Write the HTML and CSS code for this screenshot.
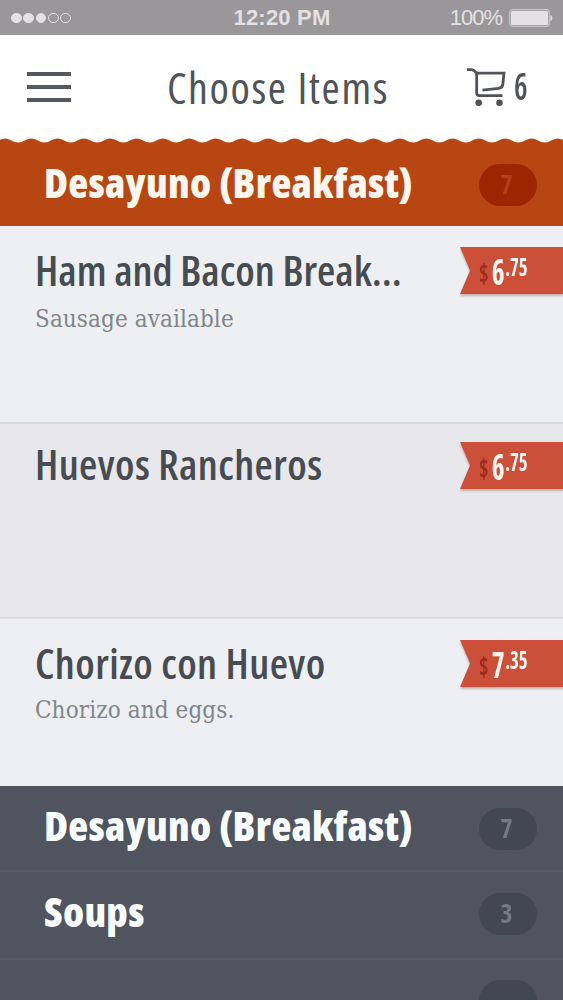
FILE: index.html
```
<!DOCTYPE html>
<html lang="en">

<head>
    <meta charset="UTF-8">
    <meta name="viewport" content="width=device-width, initial-scale=1.0">
    <title>Choose Items</title>
    <link rel="stylesheet" href="styles.css">
</head>

<body>
    <div class="screen">
        <!-- Status bar -->
        <div class="status-bar">
            <div class="signal">
                <i class="dot"></i><i class="dot"></i><i class="dot"></i><i class="dot empty"></i><i class="dot empty"></i>
            </div>
            <div class="clock">12:20 PM</div>
            <div class="battery">
                <span>100%</span>
                <svg width="44" height="18" viewBox="0 0 44 18">
                    <rect x="0.7" y="0.7" width="39.6" height="16.6" rx="3" fill="none" stroke="#c9c7c9" stroke-width="1.2" />
                    <rect x="2" y="2" width="37" height="14" rx="1.5" fill="#e3e1e3" />
                    <path d="M41.5 6c2.4 1 2.4 5 0 6z" fill="#e3e1e3" />
                </svg>
            </div>
        </div>

        <!-- Header -->
        <header class="header">
            <button class="menu-btn" aria-label="Menu"><i></i><i></i><i></i></button>
            <h1>Choose Items</h1>
            <div class="cart">
                <svg width="40" height="40" viewBox="0 0 40 40" fill="none" stroke="#505358" stroke-width="2.8">
                    <path d="M0 2.6H4.5Q6.5 2.600 9.700 6V26Q9.700 28.700 12.500 28.700H35.500" />
                    <path d="M9.700 6.200H37L35.800 17.500Q35.400 20.800 31.500 21.400L15.500 23.200" />
                    <circle cx="11.700" cy="35.700" r="3.300" fill="#505358" stroke="none" />
                    <circle cx="32.500" cy="35.700" r="3.300" fill="#505358" stroke="none" />
                </svg>
                <span class="cart-count">6</span>
            </div>
        </header>

        <!-- Open category -->
        <div class="wave">
            <svg width="563" height="6">
                <defs>
                    <pattern id="scallop" x="-8.2" width="26.33" height="6" patternUnits="userSpaceOnUse">
                        <path d="M0 4.6C5 4.6 8 .6 13.16 .6S21.3 4.6 26.33 4.6V6H0z" fill="#b84613" />
                    </pattern>
                </defs>
                <rect width="563" height="6" fill="url(#scallop)" />
            </svg>
        </div>
        <div class="category active">
            <h2>Desayuno (Breakfast)</h2>
            <span class="badge"><b>7</b></span>
        </div>

        <div class="item">
            <div class="info">
                <h3 class="long">Ham and Bacon Break...</h3>
                <p>Sausage available</p>
            </div>
            <div class="price"><div class="tag"><span class="amount"><i>$</i>6<sup>.75</sup></span></div></div>
        </div>
        <div class="item alt">
            <div class="info">
                <h3>Huevos Rancheros</h3>
            </div>
            <div class="price"><div class="tag"><span class="amount"><i>$</i>6<sup>.75</sup></span></div></div>
        </div>
        <div class="item last">
            <div class="info">
                <h3>Chorizo con Huevo</h3>
                <p>Chorizo and eggs.</p>
            </div>
            <div class="price"><div class="tag"><span class="amount"><i>$</i>7<sup>.35</sup></span></div></div>
        </div>

        <!-- Other categories -->
        <div class="category first">
            <h2>Desayuno (Breakfast)</h2>
            <span class="badge"><b>7</b></span>
        </div>
        <div class="category soups">
            <h2>Soups</h2>
            <span class="badge"><b>3</b></span>
        </div>
        <div class="category next">
            <span class="badge"></span>
        </div>
    </div>
</body>

</html>
```
FILE: styles.css
```
* {
    box-sizing: border-box;
}

body {
    margin: 0;
    font-family: "Open Sans", "Noto Sans", sans-serif;
    font-stretch: 75%;
    background: #fff;
}

h1,
h2,
h3,
p {
    margin: 0;
    white-space: nowrap;
}

.screen {
    width: 563px;
    height: 1000px;
    overflow: hidden;
}

/* Status bar */

.status-bar {
    display: grid;
    grid-template-columns: 1fr auto 1fr;
    align-items: center;
    height: 35px;
    padding: 1px 10px 0 11px;
    background: #999799;
    color: #e3e1e3;
    font-family: "Liberation Sans", Arial, sans-serif;
    font-size: 22px;
}

.signal {
    display: flex;
    gap: 1.5px;
}

.dot {
    width: 10.8px;
    height: 10.8px;
    border: 1px solid #e3e1e3;
    border-radius: 50%;
    background: #e3e1e3;
}

.dot.empty {
    background: none;
}

.clock {
    font-weight: bold;
    letter-spacing: 0.2px;
}

.battery {
    display: flex;
    justify-content: flex-end;
    align-items: center;
    gap: 7px;
    letter-spacing: -1px;
}

/* Header */

.header {
    display: grid;
    grid-template-columns: 167px 1fr 96px;
    align-items: center;
    height: 103px;
    color: #505358;
}

.menu-btn {
    display: flex;
    flex-direction: column;
    gap: 9px;
    width: 44px;
    margin-left: 27px;
    padding: 1px 0 0;
    border: none;
    background: none;
}

.menu-btn i {
    height: 4px;
    background: #55585f;
}

.header h1 {
    font-size: 44px;
    font-weight: 400;
    letter-spacing: 1.6px;
}

.cart {
    display: flex;
    align-items: center;
    gap: 7px;
}

.cart-count {
    padding-bottom: 4px;
    font-size: 38px;
    font-weight: 600;
    transform: scaleX(0.8);
    transform-origin: left;
}

/* Categories */

.wave {
    height: 6px;
}

.wave svg {
    display: block;
}

.category {
    display: flex;
    justify-content: space-between;
    align-items: center;
    height: 86px;
    padding: 0 26px 0 44px;
    border-bottom: 2px solid #585a66;
    background: #4f545e;
    color: #f8fbff;
}

.category.active {
    height: 82px;
    border: none;
    background: #b84613;
    color: #fff6ee;
}

.category.first {
    padding-top: 2px;
}

.category.soups {
    height: 88px;
    padding-bottom: 2px;
}

.category h2 {
    padding-bottom: 6px;
    font-size: 41px;
    font-weight: 800;
    letter-spacing: 0.3px;
}

.category.first h2 {
    padding-bottom: 8px;
}

.badge {
    display: flex;
    justify-content: center;
    align-items: center;
    width: 58px;
    height: 42px;
    border-radius: 21px;
    background: #424852;
    color: #737a85;
    font-size: 27px;
}

.badge b {
    padding: 0 3px 3px 0;
    transform: scaleX(0.95);
}

.active .badge {
    background: #9d2600;
    color: #b53f1a;
}

.category.next {
    justify-content: flex-end;
    align-items: flex-start;
    padding-top: 20px;
}

/* Items */

.item {
    display: flex;
    justify-content: space-between;
    height: 198px;
    padding: 21px 0 0 35px;
    border-bottom: 2px solid #d9dadf;
    background: #eeeff2;
}

.item.alt {
    height: 195px;
    padding-top: 18px;
    background: #e8e7eb;
}

.item.last {
    height: 167px;
    border: none;
}

.item h3 {
    height: 48px;
    color: #464c51;
    font-size: 42px;
    font-weight: 600;
    letter-spacing: 0.4px;
    line-height: 46px;
}

.item.alt h3 {
    line-height: 44px;
}

.item h3.long {
    letter-spacing: 0;
}

.item p {
    margin-top: 8px;
    color: #7d868c;
    font-family: "DejaVu Serif Condensed", "DejaVu Serif", serif;
    font-size: 24px;
    letter-spacing: 0.1px;
    line-height: 32px;
}

.item.last p {
    margin-top: 6px;
}

.price {
    filter: drop-shadow(0 2px 1px rgba(120, 60, 50, 0.35));
}

.tag {
    width: 103px;
    height: 47px;
    padding-left: 19px;
    background: #cc4f3a;
    color: #fff5ee;
    clip-path: polygon(0 0, 100% 0, 100% 100%, 0 100%, 10px 50%);
}

/* Narrow figures on the price tags */
.amount {
    display: inline-block;
    font-size: 35px;
    font-weight: 700;
    line-height: 49px;
    white-space: nowrap;
    transform: scaleX(0.78);
    transform-origin: left;
}

.amount i {
    margin-right: 4px;
    color: #9c2e1c;
    font-size: 26px;
    font-style: normal;
    vertical-align: 2px;
}

.amount sup {
    margin-left: 1px;
    font-size: 24px;
    line-height: 0;
    vertical-align: 9px;
}
```
